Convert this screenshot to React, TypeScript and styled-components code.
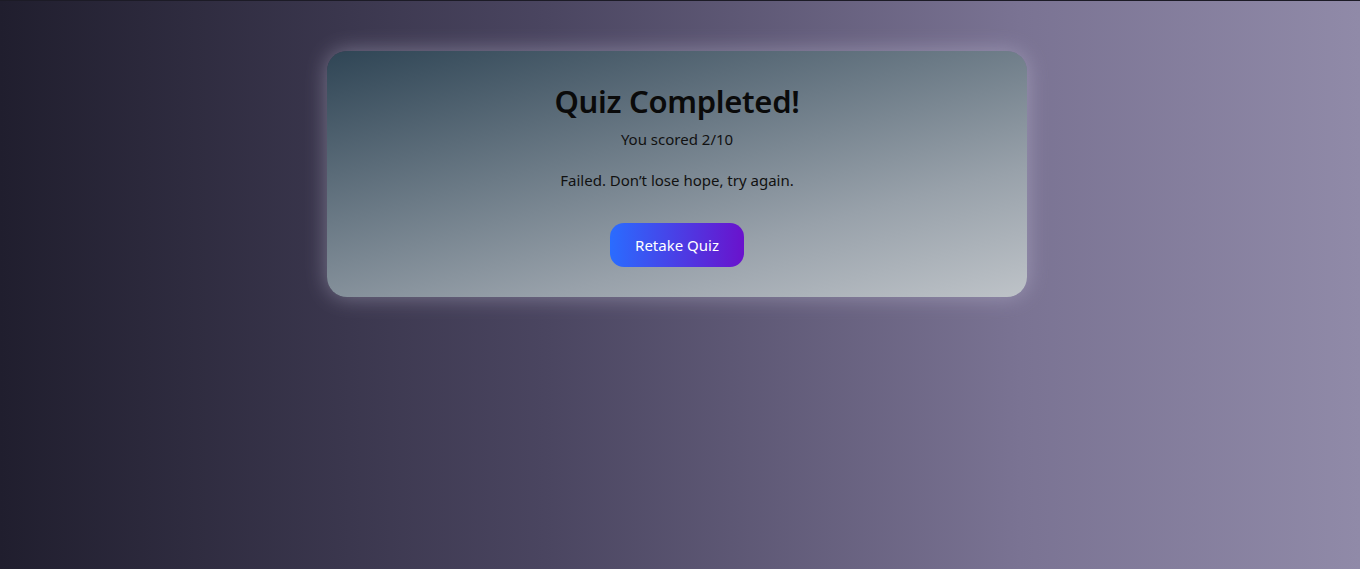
import React from "react";
import styled, { createGlobalStyle } from "styled-components";

const GlobalStyle = createGlobalStyle`
  html, body {
    margin: 0;
    padding: 0;
    height: 100%;
  }
  body {
    font-family: "Noto Sans", "Open Sans", sans-serif;
  }
  #root {
    height: 100%;
  }
`;

// page background
const Page = styled.div`
  box-sizing: border-box;
  min-height: 100vh;
  border-top: 1px solid #1c1b26;
  background: linear-gradient(to right, #201e2e 0%, #4a4560 40%, #7a7393 75%, #908aa8 100%);
  display: flex;
  justify-content: center;
  align-items: flex-start;
  padding: 50px 6px 0 0;
`;

const Card = styled.div`
  box-sizing: border-box;
  width: 700px;
  height: 246px;
  padding: 28px 20px 30px;
  border-radius: 20px;
  background: linear-gradient(165deg, #2f4555 0%, #6b7a86 40%, #98a1aa 70%, #bec3c8 100%);
  box-shadow: 0 0 22px rgba(200, 195, 220, 0.45);
  display: flex;
  flex-direction: column;
  align-items: center;
  text-align: center;
  color: #0a0a0a;
`;

const Title = styled.h2`
  margin: 0;
  font-size: 31px;
  font-weight: 600;
  line-height: 44px;
  letter-spacing: -0.3px;
`;

const Text = styled.p<{ $gap: number }>`
  margin: ${(p) => p.$gap}px 0 0;
  font-size: 15px;
  line-height: 22px;
  color: #111;
`;

const RetakeButton = styled.button`
  margin-top: 32px;
  width: 134px;
  height: 44px;
  border: none;
  border-radius: 14px;
  background: linear-gradient(to right, #2a6cff, #6a12cc);
  color: #ffffff;
  font-family: inherit;
  font-size: 15px;
  cursor: pointer;
`;

const App: React.FC = () => {
  return (
    <>
      <GlobalStyle />
      <Page>
        <Card>
          <Title>Quiz Completed!</Title>
          <Text $gap={5}>You scored 2/10</Text>
          <Text $gap={19}>Failed. Don’t lose hope, try again.</Text>
          <RetakeButton>Retake Quiz</RetakeButton>
        </Card>
      </Page>
    </>
  );
};

export default App;
